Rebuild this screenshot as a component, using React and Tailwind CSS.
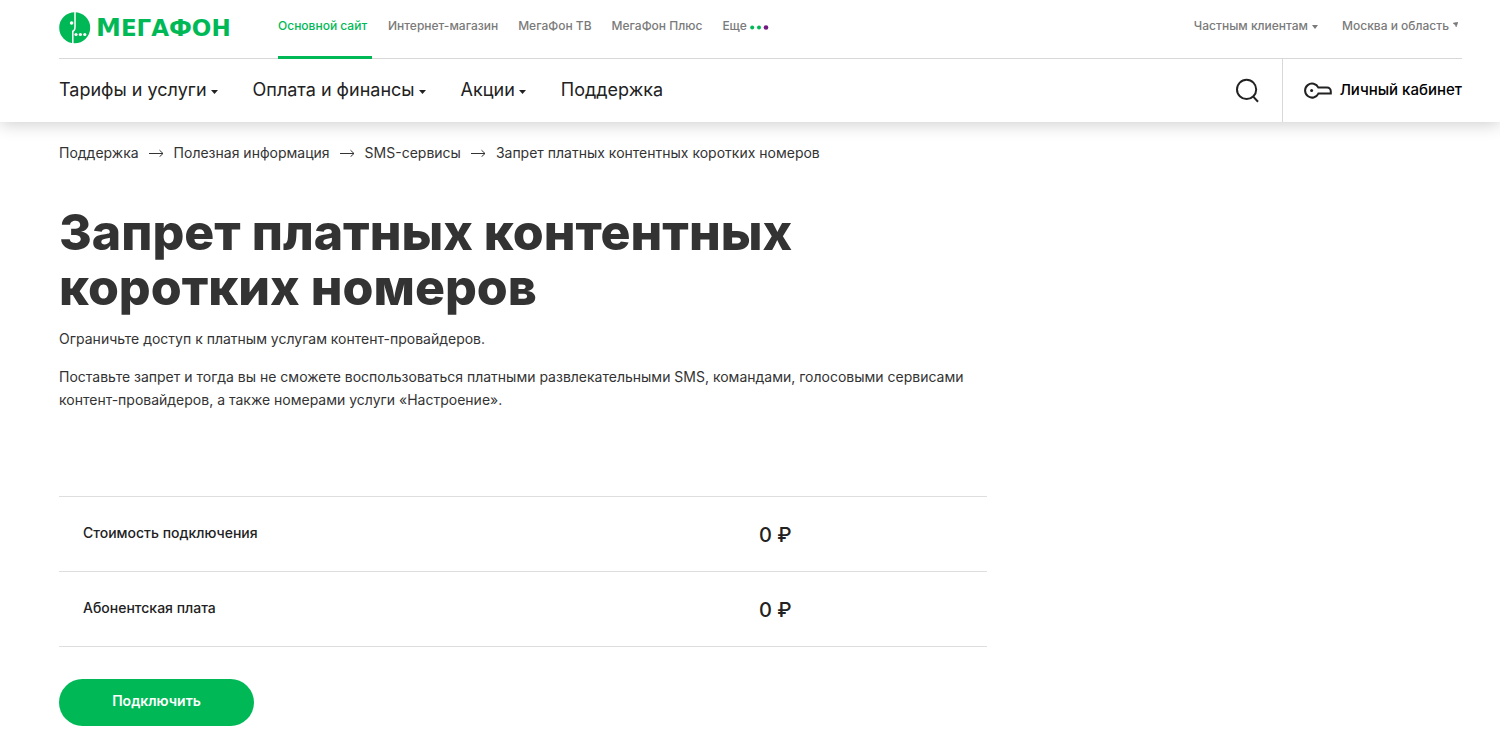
import React from 'react';

const siteLinks = ['Интернет-магазин', 'МегаФон ТВ', 'МегаФон Плюс'];

const menu = [
  { title: 'Тарифы и услуги', dropdown: true },
  { title: 'Оплата и финансы', dropdown: true },
  { title: 'Акции', dropdown: true },
  { title: 'Поддержка', dropdown: false },
];

const breadcrumbs = ['Поддержка', 'Полезная информация', 'SMS-сервисы'];

const prices = [
  { name: 'Стоимость подключения', value: '0 ₽' },
  { name: 'Абонентская плата', value: '0 ₽' },
];

function Logo() {
  return (
    <a href="#" className="flex w-[219px] items-center gap-[5px] text-[#00b956]">
      <svg width="32" height="32" viewBox="0 0 32 32" aria-hidden="true">
        <circle cx="15.7" cy="15.8" r="15.5" fill="currentColor" />
        <path d="M16 0V14.5Q16 18.6 13.8 19.2V32" fill="none" stroke="#fff" strokeWidth="1.5" />
        <circle cx="12.6" cy="11" r="1.8" fill="#fff" />
        <circle cx="17" cy="22.5" r="1.6" fill="#fff" />
        <circle cx="21.4" cy="22.5" r="1.6" fill="#fff" />
        <circle cx="25.8" cy="22.5" r="1.6" fill="#fff" />
      </svg>
      <span className="font-['DejaVu_Sans'] text-[23px] leading-8 font-bold">
        <span className="text-[25px] leading-8">М</span>ЕГАФОН
      </span>
    </a>
  );
}

function Caret() {
  return (
    <svg width="7" height="4" viewBox="0 0 7 4" className="mt-1" aria-hidden="true">
      <path d="M0 0H7L3.5 4Z" fill="currentColor" />
    </svg>
  );
}

function SmallCaret() {
  return (
    <svg width="6" height="4" viewBox="0 0 6 4" className="mt-0.5" aria-hidden="true">
      <path d="M0 0H6L3 4Z" fill="currentColor" />
    </svg>
  );
}

function Arrow() {
  return (
    <svg width="15" height="8" viewBox="0 0 15 8" fill="none" stroke="#333" aria-hidden="true">
      <path d="M0 4.5H14M10.5 1.2L14 4.5L10.5 7.8" />
    </svg>
  );
}

function Header() {
  return (
    <header className="bg-white pr-[38px] pl-[59px] shadow-[0_2px_16px_rgba(0,0,0,0.2)]">
      <div className="flex h-[59px] border-b border-[#d8d8d8] text-xs font-medium text-[#7a7a7a]">
        <div className="flex h-14 items-center">
          <Logo />
        </div>
        <nav className="flex gap-5 leading-[52px]">
          <a href="#" className="-mr-1 -mb-px w-[94px] border-b-3 border-[#00b956] text-[#00b956]">Основной сайт</a>
          {siteLinks.map((t) => (
            <a key={t} href="#">{t}</a>
          ))}
          <button className="flex h-[52px] items-center gap-[3px]">
            Еще
            <svg width="19" height="5" viewBox="0 0 19 5" className="mt-0.5" aria-hidden="true">
              <circle cx="2.2" cy="2.5" r="2" fill="#00b956" />
              <circle cx="9" cy="2.5" r="2" fill="#00b956" />
              <circle cx="16" cy="2.5" r="2.3" fill="#731982" />
            </svg>
          </button>
        </nav>
        <div className="ml-auto flex h-[52px] gap-6">
          <button className="flex items-center gap-1">Частным клиентам <SmallCaret /></button>
          <button className="flex items-center gap-1 pr-1">
            Москва и область
            <svg width="5" height="5" viewBox="0 0 5 5" className="-mt-1" aria-hidden="true">
              <path d="M0 1.2L5 0L3.2 5L2.2 2.8Z" fill="currentColor" stroke="currentColor" strokeWidth="0.5" />
            </svg>
          </button>
        </div>
      </div>

      <div className="flex h-[63px] items-center text-[#222]">
        <nav className="flex gap-[35px] pb-0.5 text-lg">
          {menu.map((item) => (
            <a key={item.title} href="#" className="flex items-center gap-1">
              {item.title}
              {item.dropdown && <Caret />}
            </a>
          ))}
        </nav>
        <button aria-label="Поиск" className="mr-[22px] ml-auto">
          <svg width="25" height="25" viewBox="0 0 25 25" fill="none" stroke="currentColor" strokeWidth="2" aria-hidden="true">
            <circle cx="11.6" cy="11.4" r="9.6" />
            <path d="M18 18.4L23 23.8" />
          </svg>
        </button>
        <a href="#" className="flex h-full items-center gap-2 border-l border-[#d8d8d8] pl-[21px] text-[15px] font-medium text-black">
          <svg width="28" height="17" viewBox="0 0 28 17" fill="none" stroke="#222" strokeWidth="2" aria-hidden="true">
            <path d="M14.4 5.6A7 7 0 1 0 14.4 11.6H26.8V9.6C26.8 7 25.4 5.6 23 5.6Z" />
            <circle cx="7.6" cy="8.5" r="1.5" fill="#222" stroke="none" />
          </svg>
          Личный кабинет
        </a>
      </div>
    </header>
  );
}

export default function App() {
  return (
    <div className="bg-white pb-5 font-[Inter,'Liberation_Sans',sans-serif] text-[#333]">
      <Header />

      <main className="pr-[38px] pl-[59px]">
        <nav aria-label="Навигация" className="flex items-center gap-2.5 pt-[19px] text-sm leading-6">
          {breadcrumbs.map((t) => (
            <React.Fragment key={t}>
              <a href="#">{t}</a>
              <Arrow />
            </React.Fragment>
          ))}
          <span>Запрет платных контентных коротких номеров</span>
        </nav>

        <div className="max-w-[928px]">
          <h1 className="mt-10 max-w-[800px] text-[50px] leading-[55px] font-extrabold">
            Запрет платных контентных коротких номеров
          </h1>
          <p className="mt-3 text-sm leading-[23px]">Ограничьте доступ к платным услугам контент-провайдеров.</p>
          <p className="mt-[15px] text-sm leading-[23px]">
            Поставьте запрет и тогда вы не сможете воспользоваться платными развлекательными SMS, командами, голосовыми
            сервисами контент-провайдеров, а также номерами услуги «Настроение».
          </p>

          <table className="mt-[85px] w-full border-t border-[#dedede] text-left text-[#222]">
            <tbody>
              {prices.map((p) => (
                <tr key={p.name} className="h-[75px] border-b border-[#dedede]">
                  <th scope="row" className="pb-0.5 pl-6 text-sm font-medium">{p.name}</th>
                  <td className="w-[228px] pt-0.5 text-xl font-medium">{p.value}</td>
                </tr>
              ))}
            </tbody>
          </table>

          <button className="mt-8 h-[47px] w-[195px] rounded-full bg-[#00b956] pb-1 text-sm font-semibold text-white">
            Подключить
          </button>
        </div>
      </main>
    </div>
  );
}
